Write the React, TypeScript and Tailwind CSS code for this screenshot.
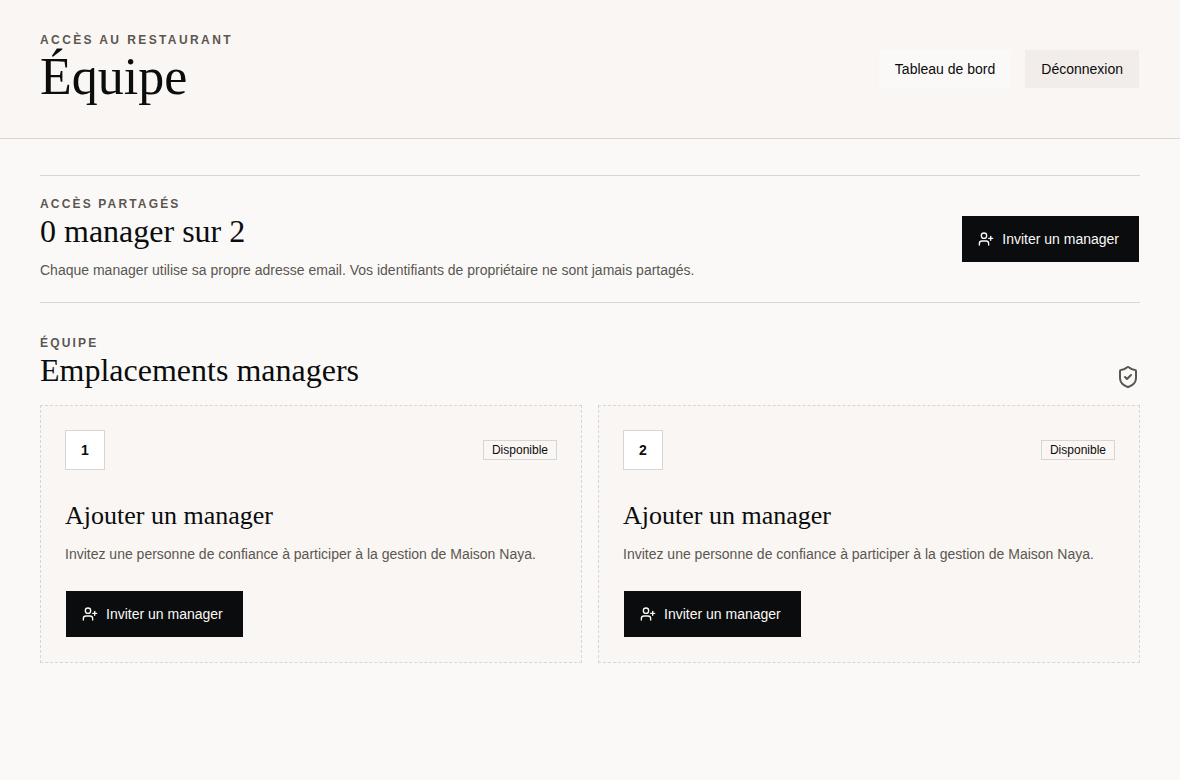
import clsx from "clsx";
import { ShieldCheck, UserPlus } from "lucide-react";
import React from "react";

const slots = [1, 2];

const Eyebrow = ({ children, wide }: { children: React.ReactNode; wide?: boolean }) => (
  <p
    className={clsx(
      "text-xs font-bold uppercase text-[#5a5651]",
      wide ? "tracking-[0.2em]" : "tracking-[0.18em]"
    )}
  >
    {children}
  </p>
);

const InviteButton = () => (
  <button
    type="button"
    className="inline-flex h-12 shrink-0 items-center gap-2 border border-transparent bg-[#0a0c0d] bg-clip-padding pl-4 pr-5 text-sm text-[#faf9f7]"
  >
    <UserPlus size={16} aria-hidden="true" />
    Inviter un manager
  </button>
);

const SlotCard = ({ slot }: { slot: number }) => (
  <article className="border border-dashed border-[#dad5d1] bg-[#faf6f3] p-6">
    <div className="flex items-center justify-between">
      <span className="flex size-10 items-center justify-center border border-[#d8d5d2] bg-white text-sm font-bold">
        {slot}
      </span>
      <span className="border border-[#d8d5d2] px-2 text-xs leading-[18px]">Disponible</span>
    </div>
    <h3 className="mt-8 font-['Liberation_Serif',serif] text-[26px] leading-7">
      Ajouter un manager
    </h3>
    <p className="mb-6 mt-3 text-sm leading-6 text-[#5a5651]">
      Invitez une personne de confiance à participer à la gestion de Maison Naya.
    </p>
    <InviteButton />
  </article>
);

const App = () => {
  return (
    <div className="min-h-screen bg-[#faf9f7] font-['Liberation_Sans',Arial,sans-serif] text-[#0a0c0d]">
      <header className="flex items-center justify-between border-b border-[#d8d5d2] bg-[#faf6f3] px-10 py-8">
        <div>
          <Eyebrow wide>Accès au restaurant</Eyebrow>
          <h1 className="font-['Liberation_Serif',serif] text-[52px] leading-[58px]">Équipe</h1>
        </div>
        <nav className="flex gap-3">
          <a
            href="#"
            className="flex h-10 items-center border border-transparent bg-[#fbf9f7] bg-clip-padding px-4 text-sm"
          >
            Tableau de bord
          </a>
          <button
            type="button"
            className="h-10 border border-transparent bg-[#f2edea] bg-clip-padding px-4 text-sm"
          >
            Déconnexion
          </button>
        </nav>
      </header>

      <main className="px-10 py-9">
        <section className="flex items-center justify-between gap-6 border-y border-[#d8d5d2] py-5">
          <div>
            <Eyebrow>Accès partagés</Eyebrow>
            <h2 className="font-['Liberation_Serif',serif] text-[32px] leading-[38px]">
              0 manager sur 2
            </h2>
            <p className="mt-2 text-sm leading-6 text-[#5a5651]">
              Chaque manager utilise sa propre adresse email. Vos identifiants de propriétaire ne
              sont jamais partagés.
            </p>
          </div>
          <InviteButton />
        </section>

        <section className="mt-8">
          <div className="mb-4 flex items-end justify-between">
            <div>
              <Eyebrow>Équipe</Eyebrow>
              <h2 className="font-['Liberation_Serif',serif] text-[32px] leading-[38px]">
                Emplacements managers
              </h2>
            </div>
            <ShieldCheck size={24} className="text-[#5a5651]" aria-hidden="true" />
          </div>
          <div className="grid grid-cols-2 gap-4">
            {slots.map((slot) => (
              <SlotCard key={slot} slot={slot} />
            ))}
          </div>
        </section>
      </main>
    </div>
  );
};
export default App;
